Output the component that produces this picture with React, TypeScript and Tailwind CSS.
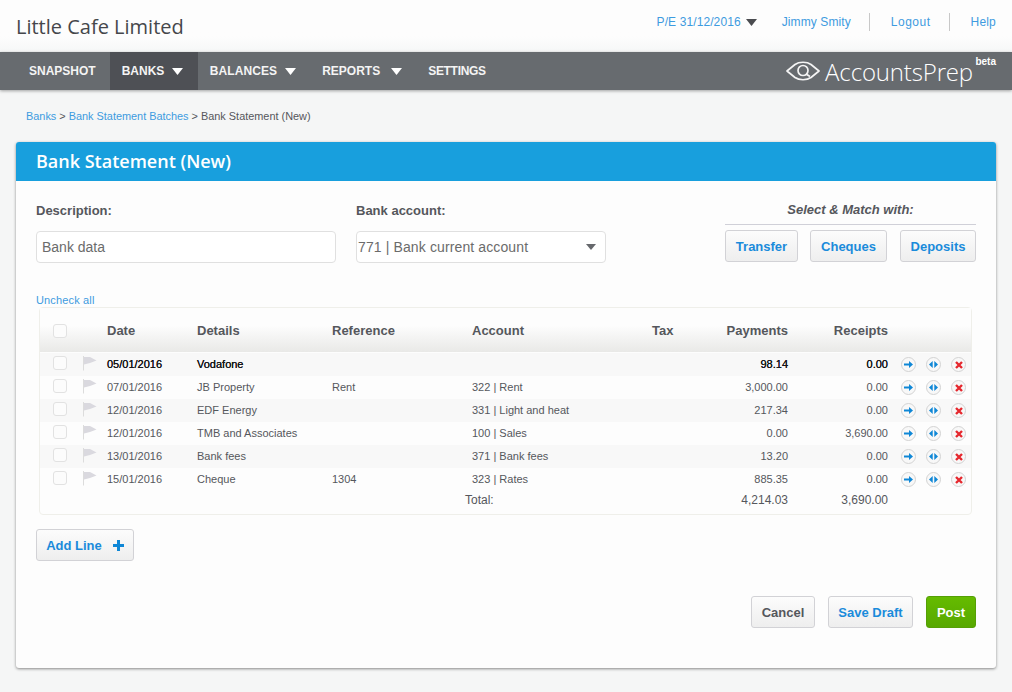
import React from "react";

const Caret = ({ className = "" }: { className?: string }) => (
  <svg width="11" height="7" viewBox="0 0 11 7" className={className}>
    <path d="M0 0H11L5.5 7Z" fill="currentColor" />
  </svg>
);

const Flag = () => (
  <svg width="15" height="15" viewBox="0 0 15 15" className="shrink-0">
    <path d="M1.5 0V14.5" stroke="#dcdcdc" strokeWidth="1" />
    <path d="M2 1H8L14.5 4.5L8 7L2 8.5Z" fill="#dad9df" />
  </svg>
);

const Check = ({ className = "" }: { className?: string }) => (
  <span className={`block w-[14px] h-[14px] shrink-0 rounded-[3px] border border-[#e2e2e2] bg-[#fcfcfc] ${className}`} />
);

const Circle = ({ children }: { children: React.ReactNode }) => (
  <span className="flex items-center justify-center w-[15px] h-[15px] rounded-full border border-[#d3d3d3] bg-[#f8f8f8]">
    {children}
  </span>
);

const Actions = () => (
  <div className="flex gap-[10px] ml-[13px]">
    <Circle>
      <svg width="9" height="7" viewBox="0 0 9 7">
        <path d="M0 2.5H5V0L9 3.5L5 7V4.5H0Z" fill="#0f87d6" />
      </svg>
    </Circle>
    <Circle>
      <svg width="9" height="7" viewBox="0 0 9 7">
        <path d="M3.7 0V7L0 3.5ZM5.3 0V7L9 3.5Z" fill="#0f87d6" />
      </svg>
    </Circle>
    <Circle>
      <svg width="8" height="8" viewBox="0 0 8 8">
        <path d="M1 1L7 7M7 1L1 7" stroke="#e5282e" strokeWidth="2.4" />
      </svg>
    </Circle>
  </div>
);

const rows = [
  { d: "05/01/2016", n: "Vodafone", r: "", a: "", p: "98.14", c: "0.00", bold: true },
  { d: "07/01/2016", n: "JB Property", r: "Rent", a: "322 | Rent", p: "3,000.00", c: "0.00" },
  { d: "12/01/2016", n: "EDF Energy", r: "", a: "331 | Light and heat", p: "217.34", c: "0.00" },
  { d: "12/01/2016", n: "TMB and Associates", r: "", a: "100 | Sales", p: "0.00", c: "3,690.00" },
  { d: "13/01/2016", n: "Bank fees", r: "", a: "371 | Bank fees", p: "13.20", c: "0.00" },
  { d: "15/01/2016", n: "Cheque", r: "1304", a: "323 | Rates", p: "885.35", c: "0.00" },
];

const btn =
  "flex items-center justify-center h-[32px] pt-px rounded-[3px] border border-[#d2d2d6] bg-gradient-to-b from-[#fcfcfc] to-[#eeeeee] text-[13px] font-bold";

export default function App() {
  return (
    <div
      className="w-[1012px] h-[692px] overflow-hidden bg-[#f5f6f6] text-[#55575c]"
      style={{ fontFamily: '"Liberation Sans", Arial, sans-serif' }}
    >
      <header className="h-[52px] bg-gradient-to-b from-[#fdfdfd] from-70% to-[#f6f7f7] flex items-center justify-between pl-4 pr-4">
        <h1 className="text-[20px] leading-[28px] text-[#45474b] mt-[2px] font-['Open_Sans',sans-serif]">
          Little Cafe Limited
        </h1>
        <div className="flex items-center text-[12px] tracking-[0.1px] text-[#3d9be0] mb-[8px]">
          <span>P/E 31/12/2016</span>
          <Caret className="ml-[5px] text-[#4a4c50]" />
          <span className="ml-[25px]">Jimmy Smity</span>
          <span className="w-px h-[18px] bg-[#c8c8c8] ml-[18px]" />
          <span className="ml-[21px] tracking-[0.5px]">Logout</span>
          <span className="w-px h-[18px] bg-[#c8c8c8] ml-[18px]" />
          <span className="ml-[21px] tracking-[0.2px]">Help</span>
        </div>
      </header>

      <nav className="h-[38px] bg-[#676b6f] shadow-[0_1px_3px_rgba(0,0,0,0.35)] flex items-stretch pl-[17px] pr-[39px] text-[12px] font-bold text-[#f4f4f4]">
        <div className="flex items-center px-3">SNAPSHOT</div>
        <div className="flex items-center px-3 ml-[2px] w-[88px] bg-[#4e5055]">
          BANKS
          <Caret className="ml-2 text-white" />
        </div>
        <div className="flex items-center px-3">
          <span className="tracking-[0.1px]">BALANCES</span>
          <Caret className="ml-2 text-white" />
        </div>
        <div className="flex items-center px-3 ml-[2px]">
          REPORTS
          <Caret className="ml-[11px] text-white" />
        </div>
        <div className="flex items-center px-3 ml-[2px]">
          <span className="tracking-[-0.3px]">SETTINGS</span>
        </div>
        <div className="ml-auto relative flex items-center text-white font-normal">
          <svg width="34" height="22" viewBox="0 0 34 22" className="mr-[5px]">
            <path d="M1 11L9 4.5C13 1.5 21 1.5 25 4.5L33 11L25 17.5C21 20.5 13 20.5 9 17.5Z" fill="none" stroke="#f4f4f4" strokeWidth="1.7" strokeLinejoin="round" />
            <circle cx="17" cy="10.5" r="5" fill="none" stroke="#f4f4f4" strokeWidth="1.7" />
            <path d="M20 14L24 16.5" stroke="#f4f4f4" strokeWidth="1.7" />
          </svg>
          <span className="text-[24px] font-light tracking-[-0.15px] font-['Open_Sans',sans-serif] text-white mt-[2px]">
            AccountsPrep
          </span>
          <span className="absolute right-[-23px] top-[2px] text-[10px] font-bold">beta</span>
        </div>
      </nav>

      <div className="pl-[26px] pt-[20px] h-[52px] text-[10.9px] leading-[13px]">
        <span className="text-[#3d9be0]">Banks</span> &gt;{" "}
        <span className="text-[#3d9be0]">Bank Statement Batches</span> &gt; Bank Statement (New)
      </div>

      <main className="ml-[16px] w-[980px] h-[526px] rounded-[3px] bg-[#fdfdfd] shadow-[0_1px_3px_rgba(0,0,0,0.45)] flex flex-col overflow-hidden">
        <div className="h-[39px] shrink-0 bg-[#189fdd] pl-[20px] flex items-center text-[18px] font-semibold text-white font-['Open_Sans',sans-serif]">
          Bank Statement (New)
        </div>

        <div className="flex items-start pl-[20px] pr-[20px] pt-[21px]">
          <div className="w-[300px]">
            <div className="text-[13px] font-bold leading-[18px]">Description:</div>
            <div className="mt-[11px] h-[32px] rounded-[4px] border border-[#e0e0e0] flex items-center px-[5px] text-[14px] text-[#6b6b6b] bg-white">
              Bank data
            </div>
          </div>
          <div className="w-[250px] ml-[20px]">
            <div className="text-[13px] font-bold leading-[18px]">Bank account:</div>
            <div className="mt-[11px] h-[32px] rounded-[4px] border border-[#e0e0e0] flex items-center justify-between pl-[1px] pr-[9px] text-[14px] text-[#6b6b6b] bg-white">
              <span className="tracking-[0.12px]">771 | Bank current account</span>
              <svg width="10" height="6" viewBox="0 0 10 6">
                <path d="M0 0H10L5 6Z" fill="#66686c" />
              </svg>
            </div>
          </div>
          <div className="w-[251px] ml-auto mt-[1px]">
            <div className="h-[20px] border-b border-[#d0d0d8] text-center text-[13px] italic font-bold leading-[14px] box-content pb-[1px]">
              Select &amp; Match with:
            </div>
            <div className="flex mt-[5px] text-[#1a8bdb]">
              <div className={`${btn} w-[73px]`}>Transfer</div>
              <div className={`${btn} w-[77px] ml-[12px]`}>Cheques</div>
              <div className={`${btn} w-[76px] ml-[13px]`}>Deposits</div>
            </div>
          </div>
        </div>

        <div className="pl-[20px] mt-[31px] text-[11px] tracking-[0.15px] leading-[13px] text-[#3d9be0]">Uncheck all</div>

        <div className="ml-[23px] mr-[24px] h-[208px] border border-[#efefea] rounded-[4px] text-[11px] bg-[#fdfdfd]">
          <div className="h-[44px] pt-[2px] bg-gradient-to-b from-[#fdfdfd] from-40% to-[#e9e9e7] flex items-center pl-[13px] text-[13px] font-bold">
            <Check />
            <span className="w-[40px] shrink-0" />
            <span className="w-[90px]">Date</span>
            <span className="w-[135px]">Details</span>
            <span className="w-[140px]">Reference</span>
            <span className="w-[180px]">Account</span>
            <span className="w-[60px]">Tax</span>
            <span className="w-[76px] text-right">Payments</span>
            <span className="w-[100px] text-right">Receipts</span>
          </div>
          <div className="pt-px">
            {rows.map((r, i) => (
              <div
                key={i}
                className={`h-[23px] flex items-center pl-[13px] ${i % 2 === 0 ? "bg-[#f8f8f8]" : "bg-[#fdfdfd]"} ${
                  r.bold ? "text-[#17181a] [text-shadow:0_0_0.6px_#000]" : ""
                }`}
              >
                <Check className="-mt-[3px]" />
                <span className="ml-[15px] w-[25px] shrink-0 -mt-[3px]">
                  <Flag />
                </span>
                <span className="w-[90px]">{r.d}</span>
                <span className="w-[135px]">{r.n}</span>
                <span className="w-[140px]">{r.r}</span>
                <span className="w-[180px]">{r.a}</span>
                <span className="w-[60px]" />
                <span className="w-[76px] text-right">{r.p}</span>
                <span className="w-[100px] text-right">{r.c}</span>
                <Actions />
              </div>
            ))}
            <div className="h-[18px] flex items-center pl-[425px] text-[12px]">
              <span className="w-[323px] flex justify-between shrink-0">
                <span>Total:</span>
                <span>4,214.03</span>
              </span>
              <span className="w-[100px] text-right">3,690.00</span>
            </div>
          </div>
        </div>

        <div className={`${btn} w-[98px] ml-[20px] mt-[14px] text-[#1a8bdb]`}>
          Add Line
          <svg width="11" height="11" viewBox="0 0 11 11" className="ml-[11px]">
            <path d="M4 0H7V4H11V7H7V11H4V7H0V4H4Z" fill="#0f87d6" />
          </svg>
        </div>

        <div className="flex justify-end gap-[13px] pr-[20px] mt-[35px]">
          <div className={`${btn} w-[64px]`}>Cancel</div>
          <div className={`${btn} w-[85px] text-[#1a8bdb]`}>Save Draft</div>
          <div className="flex items-center justify-center h-[32px] pt-px w-[50px] rounded-[3px] border border-[#559f06] bg-gradient-to-b from-[#65bb00] to-[#57a800] text-[13px] font-bold text-white">
            Post
          </div>
        </div>
      </main>
    </div>
  );
}
